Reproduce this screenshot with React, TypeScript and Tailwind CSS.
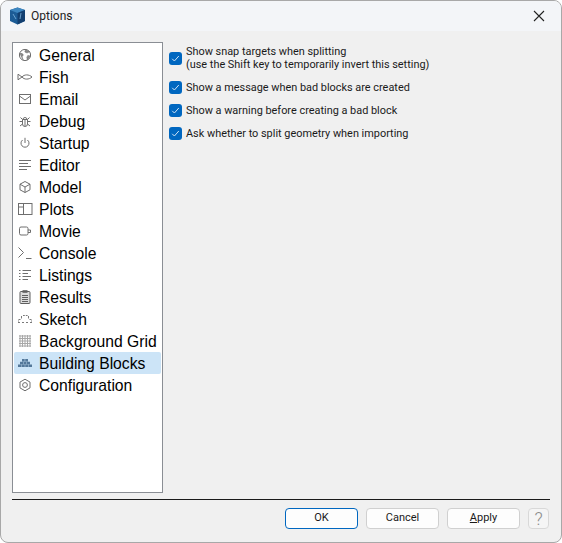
import type { ReactNode } from "react";

const stroke = { fill: "none", stroke: "#6e6e6e", strokeWidth: 1 };

const icons: Record<string, ReactNode> = {
  General: (
    <>
      <circle cx="8" cy="8" r="5.6" {...stroke} />
      <path d="M2.8 6.5c1.8-.4 3 .2 3.4 1.2.3 1-1.4 1.2-1 2.6l1 2.6ZM8.5 2.6 7.8 5l2.2 1 2.6-1.2ZM13.4 9l-2.6-.6-1 1.8.4 2.8Z" fill="#8a8a8a" stroke="#6e6e6e" strokeWidth=".5" />
    </>
  ),
  Fish: <path d="M5 8c2.2-2.8 7-2.8 10 0-3 2.8-7.8 2.8-10 0ZM5 8 1 5.2v5.6Z" {...stroke} />,
  Email: (
    <>
      <rect x="2.5" y="3.5" width="11" height="9" fill="none" stroke="#6e6e6e" strokeWidth="1" />
      <path d="m2.5 5 5.5 4 5.5-4" {...stroke} />
    </>
  ),
  Debug: (
    <path d="M5.5 6.5h5V11a2.5 2.5 0 0 1-5 0ZM6 6.5a2 2 0 0 1 4 0M8 7v6M5.5 8.5H2.5M10.5 8.5h3M5.5 11l-2.5 2M10.5 11l2.5 2M5.5 6.5 3.5 4.5M10.5 6.5l2-2" {...stroke} />
  ),
  Startup: <path d="M5.6 5a4 4 0 1 0 4.8 0M8 2.8V8" {...stroke} />,
  Editor: <path d="M2 3.5h12M2 6.5h9M2 9.5h12M2 12.5h8" {...stroke} />,
  Model: <path d="m8 2.5 5 2.7v5.6l-5 2.7-5-2.7V5.2Zm-5 2.7L8 8l5-2.8M8 8v5.5" {...stroke} />,
  Plots: (
    <>
      <rect x="1.5" y="2.5" width="13.5" height="11" {...stroke} />
      <path d="M6.5 2.5v11M1.5 6h5" {...stroke} />
    </>
  ),
  Movie: (
    <>
      <rect x="2.5" y="4" width="8.5" height="8" rx="1.5" {...stroke} />
      <path d="M11 7h2.5v2.5H11" {...stroke} />
    </>
  ),
  Console: <path d="m1.5 2.5 5 5-5 5M9 13.5h5.5" {...stroke} />,
  Listings: (
    <path d="M2 3.5h1.5M5.5 3.5H14M2 6.5h1.5M5.5 6.5H11M2 9.5h1.5M5.5 9.5H14M2 12.5h1.5M5.5 12.5H11" {...stroke} />
  ),
  Results: (
    <>
      <rect x="3" y="2.5" width="10" height="12" rx="1" fill="#dcdcdc" stroke="#5f5f5f" strokeWidth="1" />
      <rect x="5.5" y="1.2" width="5" height="2.6" fill="#5f5f5f" />
      <path d="M5 6.5h6M5 8.5h6M5 10.5h6M5 12.5h6" fill="none" stroke="#5f5f5f" strokeWidth="1" />
    </>
  ),
  Sketch: (
    <path d="M6 4.5h1.8M8.8 4.5h1.8M4.5 5v2.5M11.5 5v2.5M1.5 8.5h2M12.5 8.5h2M1.5 9.5v1M14.5 9.5v1M1 11.5h2M5 11.5h2M9 11.5h2M13 11.5h2" fill="none" stroke="#7a7a7a" strokeWidth="1" />
  ),
  "Background Grid": (
    <path d="M3 2v12M5.5 2v12M8 2v12M10.5 2v12M13 2v12M2 3h12M2 5.5h12M2 8h12M2 10.5h12M2 13h12" fill="none" stroke="#a8a8a8" strokeWidth="1" />
  ),
  "Building Blocks": (
    <path d="M5 4h2.7v2.4H5ZM8.2 4H11v2.4H8.2ZM3 6.8h3v2.4H3ZM6.4 6.8h3.2v2.4H6.4ZM10 6.8h3v2.4h-3ZM1 9.6h3.4V12H1ZM4.8 9.6h3V12h-3ZM8.2 9.6h3V12h-3ZM11.6 9.6H15V12h-3.4Z" fill="#54789a" />
  ),
  Configuration: (
    <>
      <path d="m8 2.2 5 2.9v5.8l-5 2.9-5-2.9V5.1Z" {...stroke} />
      <circle cx="8" cy="8" r="2.4" {...stroke} />
    </>
  ),
};

const pages = Object.keys(icons);

const options = [
  ["Show snap targets when splitting", "(use the Shift key to temporarily invert this setting)"],
  ["Show a message when bad blocks are created"],
  ["Show a warning before creating a bad block"],
  ["Ask whether to split geometry when importing"],
];

function Check() {
  return (
    <span className="flex h-[13px] w-[13px] shrink-0 items-center justify-center rounded-[3px] bg-[#0067c0]">
      <svg width="9" height="9" viewBox="0 0 9 9">
        <path d="m1.2 4.8 2.2 2.2 4.4-5" fill="none" stroke="#cfe3f5" strokeWidth="1" />
      </svg>
    </span>
  );
}

function Btn({ children, primary }: { children: ReactNode; primary?: boolean }) {
  return (
    <button
      className={`h-[21px] w-[73px] rounded-[4px] border bg-[#fdfdfd] text-[11px] text-[#1a1a1a] ${
        primary ? "border-[#0067c0]" : "border-[#d0d0d0]"
      }`}
    >
      {children}
    </button>
  );
}

export default function App() {
  return (
    <div className="h-[543px] w-[562px] bg-white font-['Roboto',sans-serif]">
      <div className="flex h-full w-full flex-col overflow-hidden rounded-lg border border-[#a8a8a8] bg-[#f0f0f0]">
        <div className="flex h-[30px] shrink-0 items-center bg-[#f3f5f8] pl-[8px] pr-[16px]">
          <svg width="17" height="18" viewBox="0 0 17 18">
            <path d="M8.5 .5 16 3v11l-7.5 3.5L1 14V3Z" fill="#1c5c96" />
            <path d="M1 3l7.5 3L16 3 8.5.5Z" fill="#3d86c0" />
            <path d="M8.5 6v11.5L16 14V3Z" fill="#123f70" />
            <path d="M4 7l3 5M12 6l-1 6" stroke="#7fb4dd" strokeWidth=".8" fill="none" />
          </svg>
          <span className="ml-[5px] text-[12px] text-[#222]">Options</span>
          <svg width="12" height="12" viewBox="0 0 12 12" className="ml-auto">
            <path d="m1 1 10 10M11 1 1 11" stroke="#222" strokeWidth="1.1" fill="none" />
          </svg>
        </div>

        <div className="flex min-h-0 flex-1 pl-[11px] pr-[11px] pt-[11px]">
          <div className="h-[451px] w-[151px] shrink-0 border border-[#8a8e94] bg-white p-[1px]">
            {pages.map((page) => (
              <div
                key={page}
                className={`flex h-[22px] items-center rounded-[2px] pl-[3px] font-['Liberation_Sans',sans-serif] text-[15.7px] text-black ${
                  page === "Building Blocks" ? "bg-[#cce4f7]" : ""
                }`}
              >
                <svg width="16" height="16" viewBox="0 0 16 16" className="mr-[6px] shrink-0">
                  {icons[page]}
                </svg>
                <span className="whitespace-nowrap pt-[2px]">{page}</span>
              </div>
            ))}
          </div>

          <div className="flex flex-col gap-[10px] pl-[6px] pt-[3px] text-[10.9px] leading-[13px] text-[#1a1a1a]">
            {options.map((lines) => (
              <div key={lines[0]} className="flex items-center gap-[4px]">
                <Check />
                <div>
                  {lines.map((line) => (
                    <div key={line} className="whitespace-nowrap">
                      {line}
                    </div>
                  ))}
                </div>
              </div>
            ))}
          </div>
        </div>

        <div className="mx-[11px] h-[1px] shrink-0 bg-[#1a1a1a]" />

        <div className="flex h-[42px] shrink-0 justify-end gap-[8px] pr-[12px] pt-[8px]">
          <Btn primary>OK</Btn>
          <Btn>Cancel</Btn>
          <Btn>
            <u>A</u>pply
          </Btn>
          <button className="h-[21px] w-[21px] rounded-[4px] border border-[#d8d8d8] bg-[#f5f5f5] text-[18px] font-light leading-none text-[#8a8a8a]">
            ?
          </button>
        </div>
      </div>
    </div>
  );
}
